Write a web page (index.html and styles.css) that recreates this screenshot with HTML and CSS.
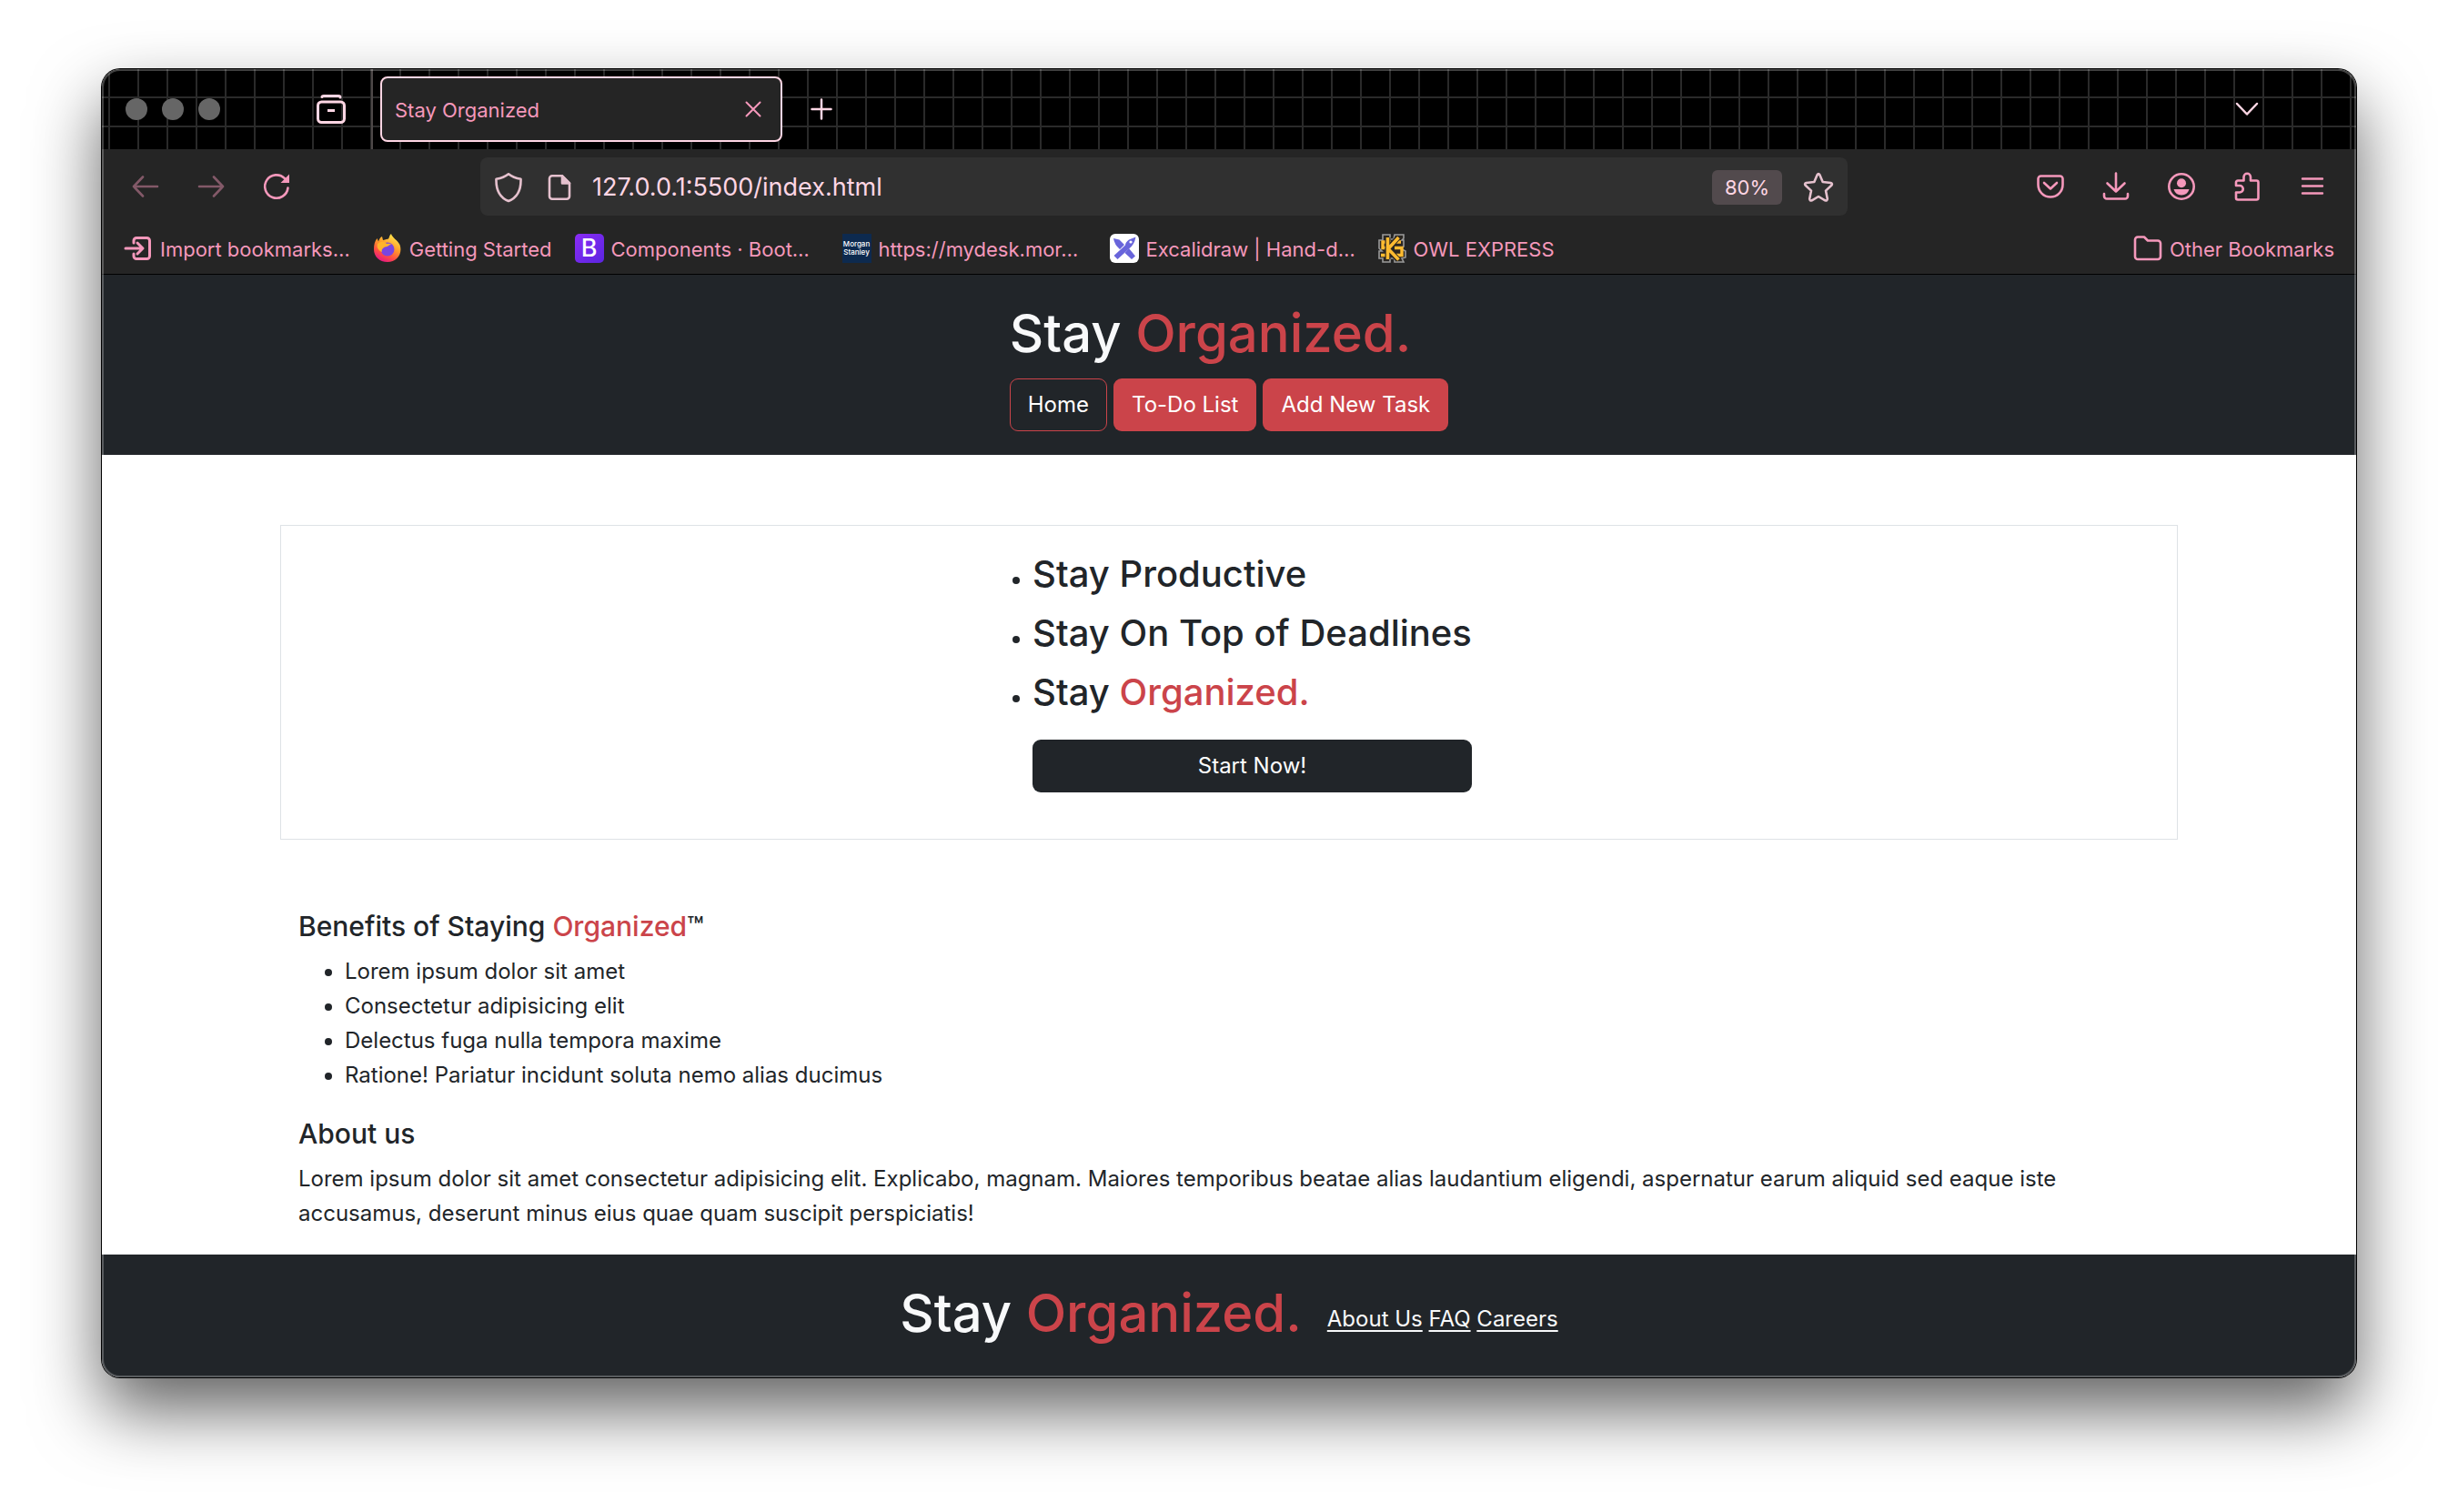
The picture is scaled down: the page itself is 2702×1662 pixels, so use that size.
FILE: index.html
```
<!DOCTYPE html>
<html lang="en">
<head>
<meta charset="utf-8">
<title>Stay Organized</title>
<link rel="stylesheet" href="styles.css">
</head>
<body>
<div class="window">
  <div class="tabstrip">
    <div class="lights"><span class="light"></span><span class="light"></span><span class="light"></span></div>
    <button class="icon-btn firefox-view" aria-label="Firefox View">
      <svg width="32" height="32" viewBox="0 0 32 32" fill="none" stroke="currentColor" stroke-width="3"><path d="M6 2.500Q6 1.500 8 1.500H24Q26 1.500 26 3" stroke-linecap="round"/><rect x="1.500" y="8" width="29" height="22.500" rx="4"/><path d="M12 17.500h8"/></svg>
    </button>
    <div class="tab">
      <span class="tab-title">Stay Organized</span>
      <button class="icon-btn" aria-label="Close tab">
        <svg width="18" height="18" viewBox="0 0 18 18" fill="none" stroke="currentColor" stroke-width="2" stroke-linecap="round"><path d="M1.500 1.500l15 15M16.500 1.500l-15 15"/></svg>
      </button>
    </div>
    <button class="icon-btn new-tab" aria-label="New tab">
      <svg width="24" height="24" viewBox="0 0 24 24" fill="none" stroke="currentColor" stroke-width="2.500" stroke-linecap="round"><path d="M12 1.500v21M1.500 12h21"/></svg>
    </button>
    <button class="icon-btn all-tabs" aria-label="List all tabs">
      <svg width="26" height="16" viewBox="0 0 26 16" fill="none" stroke="currentColor" stroke-width="2.500" stroke-linecap="round" stroke-linejoin="round"><path d="M2 2l11 11.500L24 2"/></svg>
    </button>
  </div>

  <div class="navbar">
    <div class="nav-left">
      <button class="icon-btn faded" aria-label="Back">
        <svg width="32" height="32" viewBox="0 0 32 32" fill="none" stroke="currentColor" stroke-width="2.600" stroke-linecap="round" stroke-linejoin="round"><path d="M13 5.500L3 16l10 10.500M3 16h26"/></svg>
      </button>
      <button class="icon-btn faded" aria-label="Forward">
        <svg width="32" height="32" viewBox="0 0 32 32" fill="none" stroke="currentColor" stroke-width="2.600" stroke-linecap="round" stroke-linejoin="round"><path d="M19 5.500L29 16 19 26.500M29 16H3"/></svg>
      </button>
      <button class="icon-btn" aria-label="Reload">
        <svg width="32" height="32" viewBox="0 0 32 32" fill="none" stroke="currentColor" stroke-width="2.600" stroke-linecap="round"><path d="M28.500 17.500A12.700 12.700 0 1 1 25 7.200"/><path d="M30 2.500V12H20.500z" fill="currentColor" stroke="none"/></svg>
      </button>
    </div>
    <div class="urlbar">
      <svg width="32" height="36" viewBox="0 0 32 36" fill="none" stroke="currentColor" stroke-width="2.600" stroke-linejoin="round"><path d="M16 3.300C12 6.500 7.500 8 2.500 8.800 2.200 19 4.500 28.500 16 33 27.500 28.500 29.800 19 29.500 8.800 24.500 8 20 6.500 16 3.300z"/></svg>
      <svg class="page-icon" width="26" height="30" viewBox="0 0 26 30" fill="none" stroke="currentColor" stroke-width="2.600" stroke-linejoin="round"><path d="M16 2.300H5A3 3 0 0 0 2 5.300V24.700A3 3 0 0 0 5 27.700H21A3 3 0 0 0 24 24.700V10.500z"/><path d="M16 2.300V10.500H24z" fill="currentColor"/></svg>
      <input class="url" type="text" aria-label="Address" value="127.0.0.1:5500/index.html">
      <button class="zoom-level">80%</button>
      <button class="icon-btn star" aria-label="Bookmark this page">
        <svg width="34" height="34" viewBox="0 0 34 34" fill="none" stroke="currentColor" stroke-width="2.600" stroke-linejoin="round"><path d="M15.600 3.200Q17 1 18.400 3.200L21.700 11 30.500 12Q32.800 12.800 31.300 14.800L25 20.600 26.800 29.500Q26.700 32 24.300 31.300L17 27 9.700 31.300Q7.300 32 7.200 29.500L9 20.600 2.700 14.800Q1.200 12.800 3.500 12L12.300 11z"/></svg>
      </button>
    </div>
    <div class="nav-right">
      <button class="icon-btn" aria-label="Save to Pocket">
        <svg width="32" height="32" viewBox="0 0 32 32" fill="none" stroke="currentColor" stroke-width="2.600" stroke-linecap="round" stroke-linejoin="round"><path d="M5.500 4.500H26.500A3 3 0 0 1 29.500 7.500V14A13.500 13.500 0 0 1 2.500 14V7.500A3 3 0 0 1 5.500 4.500z"/><path d="M9 12l7 6.500 7-6.500"/></svg>
      </button>
      <button class="icon-btn" aria-label="Downloads">
        <svg width="32" height="32" viewBox="0 0 32 32" fill="none" stroke="currentColor" stroke-width="2.600" stroke-linecap="round" stroke-linejoin="round"><path d="M16 1.500V21M6.500 12.500L16 21.500l9.500-9M3 24V26.500A3 3 0 0 0 6 29.500H26A3 3 0 0 0 29 26.500V24"/></svg>
      </button>
      <button class="icon-btn" aria-label="Account">
        <svg width="32" height="32" viewBox="0 0 32 32" fill="none" stroke="currentColor" stroke-width="2.600"><circle cx="16" cy="16" r="13.700"/><circle cx="16" cy="12.300" r="5" fill="currentColor" stroke="none"/><path d="M7.500 19H24.500Q22.500 25.500 16 25.500T7.500 19z" fill="currentColor" stroke="none"/></svg>
      </button>
      <button class="icon-btn" aria-label="Extensions">
        <svg width="32" height="32" viewBox="0 0 32 32" fill="none" stroke="currentColor" stroke-width="2.600" stroke-linejoin="round"><path d="M4 15V11.500A2 2 0 0 1 6 9.500H12.500V5.500A3.700 3.700 0 0 1 20 5.500V9.500H26.500A2 2 0 0 1 28.500 11.500V28.500A2 2 0 0 1 26.500 30.500H6A2 2 0 0 1 4 28.500V22.500H8A3.700 3.700 0 0 0 8 15z"/></svg>
      </button>
      <button class="icon-btn" aria-label="Menu">
        <svg width="32" height="32" viewBox="0 0 32 32" fill="none" stroke="currentColor" stroke-width="2.400" stroke-linecap="round"><path d="M5 7.500h22M5 15.500h22M5 23.500h22"/></svg>
      </button>
    </div>
  </div>

  <div class="bookmarks">
    <a class="bookmark" href="#import">
      <svg width="32" height="32" viewBox="0 0 32 32" fill="none" stroke="currentColor" stroke-width="3" stroke-linecap="round" stroke-linejoin="round"><path d="M11 10V7.500A3 3 0 0 1 14 4.500H25.500A3 3 0 0 1 28.500 7.500V24.500A3 3 0 0 1 25.500 27.500H14A3 3 0 0 1 11 24.500V22M2 16H20.500M15 10l6 6-6 6"/></svg>
      <span>Import bookmarks…</span>
    </a>
    <a class="bookmark" href="#getting-started">
      <svg width="32" height="32" viewBox="0 0 32 32"><defs><linearGradient id="fox" x1=".8" y1="0" x2=".3" y2="1"><stop offset="0" stop-color="#fff04f"/><stop offset=".45" stop-color="#ff9a2a"/><stop offset=".75" stop-color="#ff4a45"/><stop offset="1" stop-color="#e31587"/></linearGradient></defs><path d="M20 0C21 4 27 7 29.500 12 33 22 26 31 16 31 7 31 1 25 1 17 1 12 2 8 4.500 5L6 8.500C7 5.500 8 4 10 3L11 7C14 6 16 6 17 5.500 18 4 18 1.500 20 0z" fill="url(#fox)"/><circle cx="16" cy="17" r="7.500" fill="#7a45e0"/><path d="M5 11C8 8 13 8 15 11 18 10.500 20 11.500 20 11.500 18 12 17 14 13 14.500 11 16 9 17 10 20 5 18 4 14 5 11z" fill="#ffb32c"/></svg>
      <span>Getting Started</span>
    </a>
    <a class="bookmark" href="#components">
      <span class="favicon bootstrap">B</span>
      <span class="clipped">Components · Boot…</span>
    </a>
    <a class="bookmark" href="#mydesk">
      <span class="favicon morgan">Morgan<br>Stanley</span>
      <span class="clipped">https://mydesk.mor…</span>
    </a>
    <a class="bookmark" href="#excalidraw">
      <svg width="32" height="32" viewBox="0 0 32 32"><rect width="32" height="32" rx="6" fill="#fff"/><path d="M4 5L10.500 6.500 16 12 11 17Q5 12 4 5zM21 16L28 24.500 24 28 16.500 21z" fill="#6965db"/><path d="M28.500 3.500L21 6.500Q17 9.500 17 12.500L4.500 24 8.500 28 21 16.500Q27 12 28.500 3.500z" fill="#6965db"/><circle cx="23" cy="9" r="1.600" fill="#fff"/></svg>
      <span class="clipped">Excalidraw | Hand-d…</span>
    </a>
    <a class="bookmark" href="#owl">
      <svg width="32" height="32" viewBox="0 0 32 32" fill="none"><path d="M6 1H14V6H18L19 1H29V5L27 7H29V14L25 16 31 19V26L27 27 29 31H19V27H14V31H6V27H2V19H5L2 16V7H6z" fill="#2b2722" stroke="#9a9a9a" stroke-width="1.600"/><path d="M26 9H21M15 9H6V15.500H11M19 15.500H27V23.500H21M14 23.500H4" stroke="#fdbb30" stroke-width="3.400"/><path d="M11.500 4V28M23 4L12 16.500 23 28.500" stroke="#2b2722" stroke-width="6"/><path d="M11.500 4V28M23.500 4L12 16.500 23.500 28.500" stroke="#fdbb30" stroke-width="3.600"/></svg>
      <span>OWL EXPRESS</span>
    </a>
    <a class="bookmark other" href="#other">
      <svg width="32" height="32" viewBox="0 0 32 32" fill="none" stroke="currentColor" stroke-width="2.600" stroke-linejoin="round"><path d="M5 3.500H12L16 7.500H27A3 3 0 0 1 30 10.500V25A3 3 0 0 1 27 28H5A3 3 0 0 1 2 25V6.500A3 3 0 0 1 5 3.500z"/></svg>
      <span>Other Bookmarks</span>
    </a>
  </div>

  <header class="site-header">
    <div class="site-header-inner">
      <h1 class="brand">Stay <span class="accent">Organized.</span></h1>
      <nav class="menu">
        <a class="btn btn-outline" href="#home">Home</a>
        <a class="btn btn-danger" href="#todo">To-Do List</a>
        <a class="btn btn-danger" href="#add">Add New Task</a>
      </nav>
    </div>
  </header>

  <main class="container">
    <section class="hero">
      <ul class="hero-list">
        <li><h2>Stay Productive</h2></li>
        <li><h2>Stay On Top of Deadlines</h2></li>
        <li><h2>Stay <span class="accent">Organized.</span></h2></li>
        <li class="cta"><button class="btn btn-dark">Start Now!</button></li>
      </ul>
    </section>
    <section class="copy">
      <h3>Benefits of Staying <span class="accent">Organized</span>™</h3>
      <ul>
        <li>Lorem ipsum dolor sit amet</li>
        <li>Consectetur adipisicing elit</li>
        <li>Delectus fuga nulla tempora maxime</li>
        <li>Ratione! Pariatur incidunt soluta nemo alias ducimus</li>
      </ul>
      <h3>About us</h3>
      <p>Lorem ipsum dolor sit amet consectetur adipisicing elit. Explicabo, magnam. Maiores temporibus beatae alias laudantium eligendi, aspernatur earum aliquid sed eaque iste accusamus, deserunt minus eius quae quam suscipit perspiciatis!</p>
    </section>
  </main>

  <footer class="site-footer">
    <p class="brand">Stay <span class="accent">Organized.</span></p>
    <nav class="footer-links"><a href="#about">About Us</a> <a href="#faq">FAQ</a> <a href="#careers">Careers</a></nav>
  </footer>
</div>
</body>
</html>
```
FILE: styles.css
```
* { box-sizing: border-box; }

body {
  margin: 0;
  padding: 76px 112px 146px;
  background: #fff;
  color: #212529;
  font-family: Inter, "Liberation Sans", sans-serif;
  font-size: 24px;
  line-height: 38px;
}

h1, h2, h3, p, ul { margin: 0; }
h1, h2, h3 { font-weight: 500; }
svg { display: block; flex: none; }
a { color: inherit; text-decoration: none; }
button, input { font: inherit; color: inherit; }

.window {
  position: relative;
  overflow: hidden;
  border-radius: 20px;
  background: #fff;
  box-shadow: 0 0 0 1px #000, 0 36px 76px rgba(0, 0, 0, .62);
}

/* Thin light rim drawn over the window's content */
.window::after {
  content: "";
  position: absolute;
  inset: 0;
  border: 2px solid rgba(255, 255, 255, .25);
  border-radius: 20px;
  pointer-events: none;
}

.icon-btn {
  display: flex;
  padding: 0;
  border: 0;
  background: none;
}

/* Tab strip */
.tabstrip {
  display: flex;
  align-items: center;
  height: 88px;
  padding-left: 26px;
  padding-right: 107px;
  color: #ffd6e4;
  background-color: #000;
  background-image:
    linear-gradient(#2a2a2a 2px, transparent 2px),
    linear-gradient(90deg, #2a2a2a 2px, transparent 2px);
  background-size: 32px 32px;
  background-position: 7px 30px;
}
.lights { display: flex; gap: 16px; }
.light { width: 24px; height: 24px; border-radius: 50%; background: #666; }
.firefox-view {
  align-items: center;
  height: 88px;
  margin-left: 106px;
  padding-right: 28px;
  border-right: 2px solid #4d4848;
}
.tab {
  display: flex;
  align-items: center;
  justify-content: space-between;
  width: 442px;
  height: 72px;
  margin-left: 8px;
  padding: 0 21px 0 14px;
  border: 2px solid #ffd6e4;
  border-radius: 8px;
  background: #252525;
  color: #f598bb;
  font-size: 22px;
}
.tab-title { padding-top: 2px; }
.new-tab { margin-left: 31px; }
.all-tabs { margin-left: auto; }

/* Navigation toolbar */
.navbar {
  display: flex;
  align-items: center;
  height: 82px;
  padding: 0 32px;
  background: #252525;
  color: #f598bb;
}
.nav-left { display: flex; gap: 40px; }
.faded { opacity: .45; }
.urlbar {
  display: flex;
  align-items: center;
  flex: 1;
  height: 64px;
  margin-left: 208px;
  margin-right: 207px;
  padding: 2px 15px 0;
  border-radius: 8px;
  background: #303030;
  color: #ffd6e4;
}
.urlbar svg { opacity: .88; }
.page-icon { margin-left: 27px; }
.url {
  flex: 1;
  min-width: 0;
  margin-left: 23px;
  padding: 0;
  border: 0;
  background: none;
  font-size: 27px;
}
.zoom-level {
  width: 77px;
  height: 38px;
  padding: 0;
  border: 0;
  border-radius: 6px;
  background: #524a4d;
  font-size: 22px;
}
.star { margin-left: 23px; }
.nav-right { display: flex; gap: 40px; }

/* Bookmarks toolbar */
.bookmarks {
  display: flex;
  gap: 25px;
  height: 56px;
  padding: 11px 24px 0;
  border-bottom: 1px solid #000;
  background: #252525;
  color: #f598bb;
  font-size: 22px;
  line-height: 34px;
  white-space: nowrap;
}
.bookmark { display: flex; gap: 8px; }
.bookmark.other { margin-left: auto; }
.clipped { width: 229px; }
.favicon { width: 32px; height: 32px; color: #fff; text-align: center; }
.bootstrap {
  border-radius: 5px;
  background: linear-gradient(135deg, #8a2cf5, #5b25e0);
  font-size: 27px;
  font-weight: 500;
  line-height: 32px;
}
.morgan {
  padding-top: 7px;
  background: #0d2a4f;
  font-size: 8px;
  font-weight: 500;
  line-height: 9px;
}

/* Site header */
.site-header {
  display: flex;
  justify-content: center;
  padding: 26px;
  background: #212529;
}
.brand {
  color: #f8f9fa;
  font-size: 58px;
  font-weight: 500;
  line-height: 76px;
}
.accent { color: #cb444a; }
.menu { display: flex; gap: 7px; margin-top: 12px; }
.btn {
  padding: 9px 19px;
  border: 1px solid transparent;
  border-radius: 9px;
  color: #fff;
  text-align: center;
}
.btn-outline { border-color: #cb444a; }
.btn-danger { background: #cb444a; }
.btn-dark { width: 100%; background: #212529; }

/* Page content */
.container { max-width: 2086px; margin: 0 auto; }
.hero {
  display: flex;
  justify-content: center;
  margin: 77px 0 76px;
  padding: 26px 0 51px;
  border: 1px solid #dee2e6;
}
.hero-list { padding-left: 51px; }
.hero-list li { margin-bottom: 12px; }
.hero-list h2 {
  display: inline-block;
  font-size: 40px;
  line-height: 53px;
}
.hero-list .cta { margin: 0; padding-top: 14px; list-style: none; }
.copy { padding: 0 20px 26px; }
.copy h3 { margin-bottom: 12px; font-size: 30px; }
.copy ul { margin-bottom: 26px; padding-left: 51px; }

/* Site footer */
.site-footer {
  display: flex;
  justify-content: center;
  gap: 28px;
  padding: 26px 26px 33px;
  background: #212529;
  color: #f8f9fa;
}
.footer-links { padding-top: 26px; }
.footer-links a {
  text-decoration: underline;
  text-decoration-thickness: 2px;
  text-underline-offset: 4px;
}
```
